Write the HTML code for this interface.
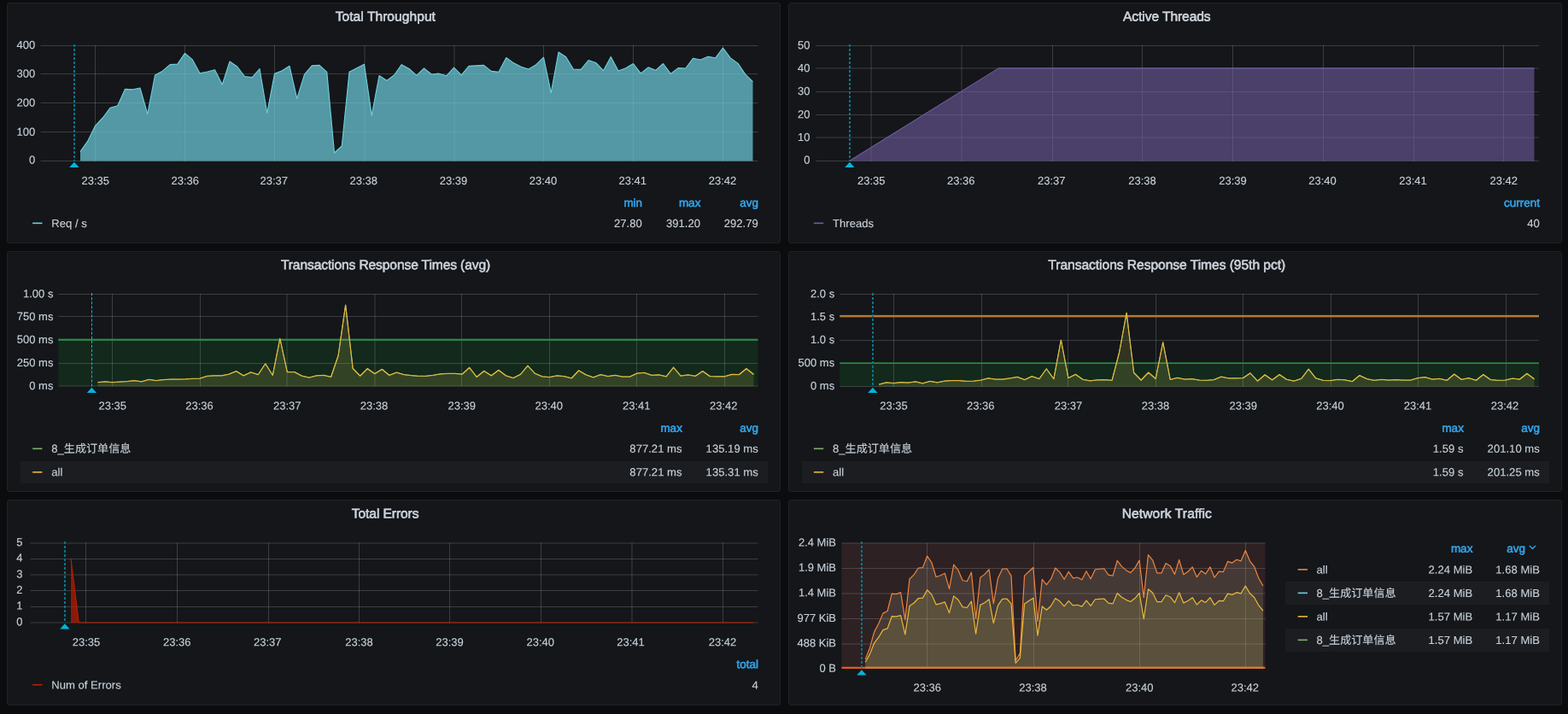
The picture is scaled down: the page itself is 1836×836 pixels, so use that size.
<!DOCTYPE html>
<html lang="zh-CN">
<head>
<meta charset="utf-8">
<title>JMeter Dashboard</title>
<style>
html,body{margin:0;padding:0;}
body{width:1836px;height:836px;overflow:hidden;background:#0b0c0e;font-family:"Liberation Sans", "Noto Sans CJK SC", sans-serif;color:#c7d0d9;position:relative;}
.panel{position:absolute;will-change:transform;box-sizing:border-box;background:#141619;border:1px solid #202226;border-radius:3px;margin:0;}
.panel>svg{position:absolute;left:-1px;top:-1px;overflow:visible;}
text{font-family:"Liberation Sans", "Noto Sans CJK SC", sans-serif;white-space:pre;}
.title{font-size:15.6px;fill:#ccd3dc;stroke:#ccd3dc;stroke-width:0.6px;}
.ax text{font-size:13.0px;fill:#c7d0d9;stroke:#c7d0d9;stroke-width:0.12px;}
.lv{font-size:13.1px;fill:#c7d0d9;stroke:#c7d0d9;stroke-width:0.12px;}
.lh{font-size:13.5px;fill:#33a2e5;stroke:#33a2e5;stroke-width:0.6px;}
.alt{fill:#1b1d21;}
</style>
</head>
<body>
<section class="panel" style="left:8px;top:3px;width:906px;height:282px">
<svg width="906" height="282" viewBox="8 3 906 282">
<text class="title" x="451.35" y="24.5" text-anchor="middle" transform="rotate(0.03 451.35 24.5)" style="letter-spacing:0.03px">Total Throughput</text>
<g class="plot">
<rect x="47.5" y="53" width="840" height="1" fill="rgba(200,200,200,0.22)"/>
<rect x="47.5" y="86" width="840" height="1" fill="rgba(200,200,200,0.22)"/>
<rect x="47.5" y="120" width="840" height="1" fill="rgba(200,200,200,0.22)"/>
<rect x="47.5" y="154" width="840" height="1" fill="rgba(200,200,200,0.22)"/>
<rect x="47.5" y="188" width="840" height="1" fill="rgba(200,200,200,0.22)"/>
<rect x="111" y="53" width="1" height="136" fill="rgba(200,200,200,0.22)"/>
<rect x="216" y="53" width="1" height="136" fill="rgba(200,200,200,0.22)"/>
<rect x="321" y="53" width="1" height="136" fill="rgba(200,200,200,0.22)"/>
<rect x="426.5" y="53" width="1" height="136" fill="rgba(200,200,200,0.22)"/>
<rect x="531.5" y="53" width="1" height="136" fill="rgba(200,200,200,0.22)"/>
<rect x="636" y="53" width="1" height="136" fill="rgba(200,200,200,0.22)"/>
<rect x="741" y="53" width="1" height="136" fill="rgba(200,200,200,0.22)"/>
<rect x="846" y="53" width="1" height="136" fill="rgba(200,200,200,0.22)"/>
<polygon points="94,188.5 94,177.67 102.75,165.17 111.5,147.33 120.25,138 129,126.33 137.75,123.83 146.5,104.33 155.25,104.83 164,103 172.75,133.5 181.5,88 190.25,83.17 199,75.67 207.75,75.17 216.5,62.33 225.25,69.67 234,85.67 242.75,84 251.5,81.67 260.25,99 269,72 277.75,78 286.5,89.5 295.25,90.67 304,80.5 312.75,132.33 321.5,86.33 330.25,82.67 339,77.33 347.75,115.33 356.5,87.17 365.25,76.83 374,76.33 382.75,84.33 391.5,179 400.25,171 409,84.33 417.75,79.67 426.5,75.17 435.25,135.17 444,88.5 452.75,94.33 461.5,88 470.25,75.67 479,80.5 487.75,88.33 496.5,79.83 505.25,87 514,86.17 522.75,88.83 531.5,79.17 540.25,87.83 549,77.33 557.75,76.83 566.5,76.33 575.25,83.33 584,84.33 592.75,67.5 601.5,73.83 610.25,78.17 619,81 627.75,75.67 636.5,67.17 645.25,108.67 654,61 662.75,66.83 671.5,81.17 680.25,81.33 689,70.5 697.75,73.5 706.5,82.67 715.25,66.5 724,83 732.75,79.67 741.5,74.5 750.25,85.83 759,78.83 767.75,82.33 776.5,74.5 785.25,86.33 794,79.67 802.75,80 811.5,68.33 820.25,70 829,66.33 837.75,67.83 846.5,56 855.25,67.83 864,74.17 872.75,87.17 881.5,95.67 881.5,188.5" fill="#6ED0E0" fill-opacity="0.7"/>
<polyline points="94,177.67 102.75,165.17 111.5,147.33 120.25,138 129,126.33 137.75,123.83 146.5,104.33 155.25,104.83 164,103 172.75,133.5 181.5,88 190.25,83.17 199,75.67 207.75,75.17 216.5,62.33 225.25,69.67 234,85.67 242.75,84 251.5,81.67 260.25,99 269,72 277.75,78 286.5,89.5 295.25,90.67 304,80.5 312.75,132.33 321.5,86.33 330.25,82.67 339,77.33 347.75,115.33 356.5,87.17 365.25,76.83 374,76.33 382.75,84.33 391.5,179 400.25,171 409,84.33 417.75,79.67 426.5,75.17 435.25,135.17 444,88.5 452.75,94.33 461.5,88 470.25,75.67 479,80.5 487.75,88.33 496.5,79.83 505.25,87 514,86.17 522.75,88.83 531.5,79.17 540.25,87.83 549,77.33 557.75,76.83 566.5,76.33 575.25,83.33 584,84.33 592.75,67.5 601.5,73.83 610.25,78.17 619,81 627.75,75.67 636.5,67.17 645.25,108.67 654,61 662.75,66.83 671.5,81.17 680.25,81.33 689,70.5 697.75,73.5 706.5,82.67 715.25,66.5 724,83 732.75,79.67 741.5,74.5 750.25,85.83 759,78.83 767.75,82.33 776.5,74.5 785.25,86.33 794,79.67 802.75,80 811.5,68.33 820.25,70 829,66.33 837.75,67.83 846.5,56 855.25,67.83 864,74.17 872.75,87.17 881.5,95.67" fill="none" stroke="#6ED0E0" stroke-width="1.1" stroke-linejoin="round" />
<line x1="87" y1="52" x2="87" y2="188.5" stroke="#0c7389" stroke-width="2" stroke-dasharray="3.1 1.9"/><polygon points="81.2,195.9 92.6,195.9 86.9,189.7" fill="#00b6db"/>
<g class="ax">
<text x="41.25" y="57" text-anchor="end" transform="rotate(0.03 41.25 57)">400</text>
<text x="41.25" y="90.4" text-anchor="end" transform="rotate(0.03 41.25 90.4)">300</text>
<text x="41.25" y="124.5" text-anchor="end" transform="rotate(0.03 41.25 124.5)">200</text>
<text x="41.25" y="158.7" text-anchor="end" transform="rotate(0.03 41.25 158.7)">100</text>
<text x="41.25" y="191.5" text-anchor="end" transform="rotate(0.03 41.25 191.5)">0</text>
<text x="111.75" y="216" text-anchor="middle" transform="rotate(0.03 111.75 216)">23:35</text>
<text x="216.75" y="216" text-anchor="middle" transform="rotate(0.03 216.75 216)">23:36</text>
<text x="320.75" y="216" text-anchor="middle" transform="rotate(0.03 320.75 216)">23:37</text>
<text x="425.75" y="216" text-anchor="middle" transform="rotate(0.03 425.75 216)">23:38</text>
<text x="531" y="216" text-anchor="middle" transform="rotate(0.03 531 216)">23:39</text>
<text x="636" y="216" text-anchor="middle" transform="rotate(0.03 636 216)">23:40</text>
<text x="740.75" y="216" text-anchor="middle" transform="rotate(0.03 740.75 216)">23:41</text>
<text x="846" y="216" text-anchor="middle" transform="rotate(0.03 846 216)">23:42</text>
</g>
</g>
<g class="legend">
<rect x="38.15" y="260.55" width="11.3" height="1.6" fill="#6ED0E0"/>
<text class="lv" x="60.25" y="266.05" transform="rotate(0.03 60.25 266.05)">Req / s</text>
<text class="lh" x="752.15" y="241.95" text-anchor="end" transform="rotate(0.03 752.15 241.95)">min</text>
<text class="lv" x="751.75" y="266.05" text-anchor="end" transform="rotate(0.03 751.75 266.05)">27.80</text>
<text class="lh" x="820.4" y="241.95" text-anchor="end" transform="rotate(0.03 820.4 241.95)">max</text>
<text class="lv" x="820" y="266.05" text-anchor="end" transform="rotate(0.03 820 266.05)">391.20</text>
<text class="lh" x="888.15" y="241.95" text-anchor="end" transform="rotate(0.03 888.15 241.95)">avg</text>
<text class="lv" x="887.75" y="266.05" text-anchor="end" transform="rotate(0.03 887.75 266.05)">292.79</text>
</g>
</svg>
</section>
<section class="panel" style="left:923px;top:3px;width:906px;height:282px">
<svg width="906" height="282" viewBox="923 3 906 282">
<text class="title" x="1366.3" y="24.5" text-anchor="middle" transform="rotate(0.03 1366.3 24.5)" style="letter-spacing:-0.09px">Active Threads</text>
<g class="plot">
<rect x="955" y="53" width="847" height="1" fill="rgba(200,200,200,0.22)"/>
<rect x="955" y="79.5" width="847" height="1" fill="rgba(200,200,200,0.22)"/>
<rect x="955" y="107" width="847" height="1" fill="rgba(200,200,200,0.22)"/>
<rect x="955" y="134" width="847" height="1" fill="rgba(200,200,200,0.22)"/>
<rect x="955" y="160.5" width="847" height="1" fill="rgba(200,200,200,0.22)"/>
<rect x="955" y="188" width="847" height="1" fill="rgba(200,200,200,0.22)"/>
<rect x="1019.5" y="53" width="1" height="136" fill="rgba(200,200,200,0.22)"/>
<rect x="1125.5" y="53" width="1" height="136" fill="rgba(200,200,200,0.22)"/>
<rect x="1232" y="53" width="1" height="136" fill="rgba(200,200,200,0.22)"/>
<rect x="1337" y="53" width="1" height="136" fill="rgba(200,200,200,0.22)"/>
<rect x="1443" y="53" width="1" height="136" fill="rgba(200,200,200,0.22)"/>
<rect x="1549" y="53" width="1" height="136" fill="rgba(200,200,200,0.22)"/>
<rect x="1655" y="53" width="1" height="136" fill="rgba(200,200,200,0.22)"/>
<rect x="1760" y="53" width="1" height="136" fill="rgba(200,200,200,0.22)"/>
<polygon points="994.5,188.5 994.5,188.5 1169.25,79.9 1796.5,79.9 1796.5,188.5" fill="#705DA0" fill-opacity="0.6"/>
<polyline points="994.5,188.5 1169.25,79.9 1796.5,79.9" fill="none" stroke="#705DA0" stroke-width="1.1" stroke-linejoin="round" />
<line x1="995" y1="52" x2="995" y2="188.5" stroke="#0c7389" stroke-width="2" stroke-dasharray="3.1 1.9"/><polygon points="989.2,195.9 1000.6,195.9 994.9,189.7" fill="#00b6db"/>
<g class="ax">
<text x="948.5" y="57.2" text-anchor="end" transform="rotate(0.03 948.5 57.2)">50</text>
<text x="948.5" y="83.9" text-anchor="end" transform="rotate(0.03 948.5 83.9)">40</text>
<text x="948.5" y="111.1" text-anchor="end" transform="rotate(0.03 948.5 111.1)">30</text>
<text x="948.5" y="138.3" text-anchor="end" transform="rotate(0.03 948.5 138.3)">20</text>
<text x="948.5" y="164.9" text-anchor="end" transform="rotate(0.03 948.5 164.9)">10</text>
<text x="948.5" y="191.6" text-anchor="end" transform="rotate(0.03 948.5 191.6)">0</text>
<text x="1020.25" y="216" text-anchor="middle" transform="rotate(0.03 1020.25 216)">23:35</text>
<text x="1125.25" y="216" text-anchor="middle" transform="rotate(0.03 1125.25 216)">23:36</text>
<text x="1231.25" y="216" text-anchor="middle" transform="rotate(0.03 1231.25 216)">23:37</text>
<text x="1337.5" y="216" text-anchor="middle" transform="rotate(0.03 1337.5 216)">23:38</text>
<text x="1443.5" y="216" text-anchor="middle" transform="rotate(0.03 1443.5 216)">23:39</text>
<text x="1548.5" y="216" text-anchor="middle" transform="rotate(0.03 1548.5 216)">23:40</text>
<text x="1654.5" y="216" text-anchor="middle" transform="rotate(0.03 1654.5 216)">23:41</text>
<text x="1760.75" y="216" text-anchor="middle" transform="rotate(0.03 1760.75 216)">23:42</text>
</g>
</g>
<g class="legend">
<rect x="952.9" y="260.55" width="11.3" height="1.6" fill="#705DA0"/>
<text class="lv" x="975" y="266.05" transform="rotate(0.03 975 266.05)">Threads</text>
<text class="lh" x="1803" y="241.95" text-anchor="end" transform="rotate(0.03 1803 241.95)">current</text>
<text class="lv" x="1802.75" y="266.05" text-anchor="end" transform="rotate(0.03 1802.75 266.05)">40</text>
</g>
</svg>
</section>
<section class="panel" style="left:8px;top:294px;width:906px;height:282px">
<svg width="906" height="282" viewBox="8 294 906 282">
<text class="title" x="451.5" y="315.3" text-anchor="middle" transform="rotate(0.03 451.5 315.3)" style="letter-spacing:-0.12px">Transactions Response Times (avg)</text>
<g class="plot">
<rect x="68.25" y="398" width="819.25" height="54.2" fill="rgba(11,237,50,0.09)"/>
<rect x="68.25" y="344" width="819.25" height="1" fill="rgba(200,200,200,0.22)"/>
<rect x="68.25" y="370" width="819.25" height="1" fill="rgba(200,200,200,0.22)"/>
<rect x="68.25" y="397.5" width="819.25" height="1" fill="rgba(200,200,200,0.22)"/>
<rect x="68.25" y="425" width="819.25" height="1" fill="rgba(200,200,200,0.22)"/>
<rect x="68.25" y="451.5" width="819.25" height="1" fill="rgba(200,200,200,0.22)"/>
<rect x="131" y="344" width="1" height="108.5" fill="rgba(200,200,200,0.22)"/>
<rect x="234" y="344" width="1" height="108.5" fill="rgba(200,200,200,0.22)"/>
<rect x="335.5" y="344" width="1" height="108.5" fill="rgba(200,200,200,0.22)"/>
<rect x="438.5" y="344" width="1" height="108.5" fill="rgba(200,200,200,0.22)"/>
<rect x="540" y="344" width="1" height="108.5" fill="rgba(200,200,200,0.22)"/>
<rect x="643" y="344" width="1" height="108.5" fill="rgba(200,200,200,0.22)"/>
<rect x="745" y="344" width="1" height="108.5" fill="rgba(200,200,200,0.22)"/>
<rect x="848" y="344" width="1" height="108.5" fill="rgba(200,200,200,0.22)"/>
<rect x="68.25" y="396.7" width="819.25" height="2.2" fill="#2b8a4a"/>
<polygon points="114.5,452.5 114.5,447.5 123.03,446.75 131.57,447.5 140.1,447 148.63,446.5 157.16,445.5 165.7,446.75 174.23,444.25 182.76,445.5 191.3,444.5 199.83,444 208.36,444 216.9,443.75 225.43,443.25 233.96,443 242.5,440.25 251.03,439.75 259.56,439.75 268.09,438 276.63,434.5 285.16,439.75 293.69,435.75 302.23,438.5 310.76,425.75 319.29,439.25 327.82,396.25 336.36,435.5 344.89,435.5 353.42,440 361.96,442 370.49,439.75 379.02,439.25 387.56,441.25 396.09,416.25 404.62,357 413.15,431.25 421.69,440 430.22,431.5 438.75,437.5 447.29,432.25 455.82,439.25 464.35,436 472.89,438.5 481.42,439.5 489.95,440.25 498.48,440.25 507.02,439.25 515.55,437.75 524.08,437.25 532.62,437.25 541.15,438 549.68,430.25 558.22,441.25 566.75,434.25 575.28,439.75 583.82,433.25 592.35,439.75 600.88,442.5 609.41,438.25 617.95,428 626.48,437.25 635.01,440.75 643.55,441.5 652.08,439.75 660.61,440.5 669.14,442.75 677.68,433.75 686.21,438.75 694.74,441.75 703.28,438.5 711.81,440.5 720.34,439.25 728.88,441 737.41,441 745.94,437 754.47,436.25 763.01,439.25 771.54,438.75 780.07,440.75 788.61,430 797.14,440 805.67,438.75 814.21,440.25 822.74,434.5 831.27,440.5 839.8,440.75 848.34,440.75 856.87,438.25 865.4,438.5 873.94,431.5 882.47,438.25 882.47,452.5" fill="#7EB26D" fill-opacity="0.1"/>
<polyline points="114.5,447.8 123.03,447.05 131.57,447.8 140.1,447.3 148.63,446.8 157.16,445.8 165.7,447.05 174.23,444.55 182.76,445.8 191.3,444.8 199.83,444.3 208.36,444.3 216.9,444.05 225.43,443.55 233.96,443.3 242.5,440.55 251.03,440.05 259.56,440.05 268.09,438.3 276.63,434.8 285.16,440.05 293.69,436.05 302.23,438.8 310.76,426.05 319.29,439.55 327.82,396.55 336.36,435.8 344.89,435.8 353.42,440.3 361.96,442.3 370.49,440.05 379.02,439.55 387.56,441.55 396.09,416.55 404.62,357.3 413.15,431.55 421.69,440.3 430.22,431.8 438.75,437.8 447.29,432.55 455.82,439.55 464.35,436.3 472.89,438.8 481.42,439.8 489.95,440.55 498.48,440.55 507.02,439.55 515.55,438.05 524.08,437.55 532.62,437.55 541.15,438.3 549.68,430.55 558.22,441.55 566.75,434.55 575.28,440.05 583.82,433.55 592.35,440.05 600.88,442.8 609.41,438.55 617.95,428.3 626.48,437.55 635.01,441.05 643.55,441.8 652.08,440.05 660.61,440.8 669.14,443.05 677.68,434.05 686.21,439.05 694.74,442.05 703.28,438.8 711.81,440.8 720.34,439.55 728.88,441.3 737.41,441.3 745.94,437.3 754.47,436.55 763.01,439.55 771.54,439.05 780.07,441.05 788.61,430.3 797.14,440.3 805.67,439.05 814.21,440.55 822.74,434.8 831.27,440.8 839.8,441.05 848.34,441.05 856.87,438.55 865.4,438.8 873.94,431.8 882.47,438.55" fill="none" stroke="#7EB26D" stroke-width="1.1" stroke-linejoin="round" />
<polygon points="114.5,452.5 114.5,447.5 123.03,446.75 131.57,447.5 140.1,447 148.63,446.5 157.16,445.5 165.7,446.75 174.23,444.25 182.76,445.5 191.3,444.5 199.83,444 208.36,444 216.9,443.75 225.43,443.25 233.96,443 242.5,440.25 251.03,439.75 259.56,439.75 268.09,438 276.63,434.5 285.16,439.75 293.69,435.75 302.23,438.5 310.76,425.75 319.29,439.25 327.82,396.25 336.36,435.5 344.89,435.5 353.42,440 361.96,442 370.49,439.75 379.02,439.25 387.56,441.25 396.09,416.25 404.62,357 413.15,431.25 421.69,440 430.22,431.5 438.75,437.5 447.29,432.25 455.82,439.25 464.35,436 472.89,438.5 481.42,439.5 489.95,440.25 498.48,440.25 507.02,439.25 515.55,437.75 524.08,437.25 532.62,437.25 541.15,438 549.68,430.25 558.22,441.25 566.75,434.25 575.28,439.75 583.82,433.25 592.35,439.75 600.88,442.5 609.41,438.25 617.95,428 626.48,437.25 635.01,440.75 643.55,441.5 652.08,439.75 660.61,440.5 669.14,442.75 677.68,433.75 686.21,438.75 694.74,441.75 703.28,438.5 711.81,440.5 720.34,439.25 728.88,441 737.41,441 745.94,437 754.47,436.25 763.01,439.25 771.54,438.75 780.07,440.75 788.61,430 797.14,440 805.67,438.75 814.21,440.25 822.74,434.5 831.27,440.5 839.8,440.75 848.34,440.75 856.87,438.25 865.4,438.5 873.94,431.5 882.47,438.25 882.47,452.5" fill="#EAB839" fill-opacity="0.1"/>
<polyline points="114.5,447.5 123.03,446.75 131.57,447.5 140.1,447 148.63,446.5 157.16,445.5 165.7,446.75 174.23,444.25 182.76,445.5 191.3,444.5 199.83,444 208.36,444 216.9,443.75 225.43,443.25 233.96,443 242.5,440.25 251.03,439.75 259.56,439.75 268.09,438 276.63,434.5 285.16,439.75 293.69,435.75 302.23,438.5 310.76,425.75 319.29,439.25 327.82,396.25 336.36,435.5 344.89,435.5 353.42,440 361.96,442 370.49,439.75 379.02,439.25 387.56,441.25 396.09,416.25 404.62,357 413.15,431.25 421.69,440 430.22,431.5 438.75,437.5 447.29,432.25 455.82,439.25 464.35,436 472.89,438.5 481.42,439.5 489.95,440.25 498.48,440.25 507.02,439.25 515.55,437.75 524.08,437.25 532.62,437.25 541.15,438 549.68,430.25 558.22,441.25 566.75,434.25 575.28,439.75 583.82,433.25 592.35,439.75 600.88,442.5 609.41,438.25 617.95,428 626.48,437.25 635.01,440.75 643.55,441.5 652.08,439.75 660.61,440.5 669.14,442.75 677.68,433.75 686.21,438.75 694.74,441.75 703.28,438.5 711.81,440.5 720.34,439.25 728.88,441 737.41,441 745.94,437 754.47,436.25 763.01,439.25 771.54,438.75 780.07,440.75 788.61,430 797.14,440 805.67,438.75 814.21,440.25 822.74,434.5 831.27,440.5 839.8,440.75 848.34,440.75 856.87,438.25 865.4,438.5 873.94,431.5 882.47,438.25" fill="none" stroke="#EAB839" stroke-width="1.1" stroke-linejoin="round" />
<line x1="107.5" y1="343" x2="107.5" y2="452.5" stroke="#00bfe6" stroke-width="1" stroke-dasharray="3.2 1.87"/><polygon points="101.7,459.9 113.1,459.9 107.4,453.7" fill="#00b6db"/>
<g class="ax">
<text x="62.4" y="348.3" text-anchor="end" transform="rotate(0.03 62.4 348.3)">1.00 s</text>
<text x="62.4" y="374.9" text-anchor="end" transform="rotate(0.03 62.4 374.9)">750 ms</text>
<text x="62.4" y="401.9" text-anchor="end" transform="rotate(0.03 62.4 401.9)">500 ms</text>
<text x="62.4" y="429.1" text-anchor="end" transform="rotate(0.03 62.4 429.1)">250 ms</text>
<text x="62.4" y="455.9" text-anchor="end" transform="rotate(0.03 62.4 455.9)">0 ms</text>
<text x="131.75" y="479.6" text-anchor="middle" transform="rotate(0.03 131.75 479.6)">23:35</text>
<text x="233.5" y="479.6" text-anchor="middle" transform="rotate(0.03 233.5 479.6)">23:36</text>
<text x="336.25" y="479.6" text-anchor="middle" transform="rotate(0.03 336.25 479.6)">23:37</text>
<text x="438" y="479.6" text-anchor="middle" transform="rotate(0.03 438 479.6)">23:38</text>
<text x="540.75" y="479.6" text-anchor="middle" transform="rotate(0.03 540.75 479.6)">23:39</text>
<text x="642.75" y="479.6" text-anchor="middle" transform="rotate(0.03 642.75 479.6)">23:40</text>
<text x="745.25" y="479.6" text-anchor="middle" transform="rotate(0.03 745.25 479.6)">23:41</text>
<text x="847.25" y="479.6" text-anchor="middle" transform="rotate(0.03 847.25 479.6)">23:42</text>
</g>
</g>
<g class="legend">
<rect class="alt" x="24" y="540" width="875" height="26"/>
<rect x="38.15" y="524.55" width="11.3" height="1.6" fill="#7EB26D"/>
<text class="lv" x="60.25" y="529.8" transform="rotate(0.03 60.25 529.8)">8_生成订单信息</text>
<rect x="38.15" y="552.05" width="11.3" height="1.6" fill="#EAB839"/>
<text class="lv" x="60.25" y="557.3" transform="rotate(0.03 60.25 557.3)">all</text>
<text class="lh" x="798.9" y="505.7" text-anchor="end" transform="rotate(0.03 798.9 505.7)">max</text>
<text class="lv" x="798.5" y="529.8" text-anchor="end" transform="rotate(0.03 798.5 529.8)">877.21 ms</text>
<text class="lv" x="798.5" y="557.3" text-anchor="end" transform="rotate(0.03 798.5 557.3)">877.21 ms</text>
<text class="lh" x="888.15" y="505.7" text-anchor="end" transform="rotate(0.03 888.15 505.7)">avg</text>
<text class="lv" x="887.75" y="529.8" text-anchor="end" transform="rotate(0.03 887.75 529.8)">135.19 ms</text>
<text class="lv" x="887.75" y="557.3" text-anchor="end" transform="rotate(0.03 887.75 557.3)">135.31 ms</text>
</g>
</svg>
</section>
<section class="panel" style="left:923px;top:294px;width:906px;height:282px">
<svg width="906" height="282" viewBox="923 294 906 282">
<text class="title" x="1366.25" y="315.3" text-anchor="middle" transform="rotate(0.03 1366.25 315.3)" style="letter-spacing:-0.04px">Transactions Response Times (95th pct)</text>
<g class="plot">
<rect x="983.25" y="425" width="818.75" height="27.4" fill="rgba(11,237,50,0.09)"/>
<rect x="983.25" y="344" width="818.75" height="1" fill="rgba(200,200,200,0.22)"/>
<rect x="983.25" y="371" width="818.75" height="1" fill="rgba(200,200,200,0.22)"/>
<rect x="983.25" y="398" width="818.75" height="1" fill="rgba(200,200,200,0.22)"/>
<rect x="983.25" y="425" width="818.75" height="1" fill="rgba(200,200,200,0.22)"/>
<rect x="983.25" y="452" width="818.75" height="1" fill="rgba(200,200,200,0.22)"/>
<rect x="1046" y="344" width="1" height="109" fill="rgba(200,200,200,0.22)"/>
<rect x="1149" y="344" width="1" height="109" fill="rgba(200,200,200,0.22)"/>
<rect x="1250" y="344" width="1" height="109" fill="rgba(200,200,200,0.22)"/>
<rect x="1353" y="344" width="1" height="109" fill="rgba(200,200,200,0.22)"/>
<rect x="1455" y="344" width="1" height="109" fill="rgba(200,200,200,0.22)"/>
<rect x="1558" y="344" width="1" height="109" fill="rgba(200,200,200,0.22)"/>
<rect x="1660" y="344" width="1" height="109" fill="rgba(200,200,200,0.22)"/>
<rect x="1763" y="344" width="1" height="109" fill="rgba(200,200,200,0.22)"/>
<rect x="983.25" y="424.35" width="818.75" height="1.7" fill="#2b8a4a"/>
<rect x="983.25" y="368.9" width="818.75" height="2.2" fill="#b9772f"/>
<polygon points="1029.25,452.5 1029.25,450 1037.78,447.75 1046.3,448.5 1054.83,447.5 1063.35,448 1071.88,446.75 1080.4,448.75 1088.92,446.25 1097.45,447.75 1105.97,446 1114.5,445.5 1123.03,445.5 1131.55,446.25 1140.08,446 1148.6,445 1157.12,442.75 1165.65,444 1174.17,444 1182.7,442.75 1191.22,441.25 1199.75,444.5 1208.28,440.5 1216.8,443.5 1225.33,431.75 1233.85,443.5 1242.38,398 1250.9,442.5 1259.42,438.25 1267.95,444.25 1276.47,445.75 1285,444.75 1293.53,444.5 1302.05,445.25 1310.58,412.5 1319.1,366.25 1327.62,436.25 1336.15,445 1344.67,436 1353.2,443.25 1361.72,400.5 1370.25,444.25 1378.78,442.25 1387.3,444 1395.83,443.5 1404.35,445 1412.88,445.25 1421.4,444.5 1429.92,441 1438.45,442.75 1446.97,442.75 1455.5,442.5 1464.03,436.75 1472.55,446 1481.08,438.75 1489.6,444.75 1498.12,438.5 1506.65,444.25 1515.17,446 1523.7,443.25 1532.22,432 1540.75,442.75 1549.28,445.25 1557.8,445.5 1566.33,444.25 1574.85,444.75 1583.38,446.5 1591.9,439.5 1600.43,443.5 1608.95,445.25 1617.47,444.25 1626,445 1634.53,444.5 1643.05,445 1651.58,445 1660.1,442.5 1668.62,441.5 1677.15,444 1685.68,443.25 1694.2,445.25 1702.72,438 1711.25,444.25 1719.78,442.5 1728.3,445.25 1736.83,438.5 1745.35,444.5 1753.88,445.25 1762.4,445 1770.93,443 1779.45,444 1787.97,437.25 1796.5,443.75 1796.5,452.5" fill="#7EB26D" fill-opacity="0.1"/>
<polyline points="1029.25,450.3 1037.78,448.05 1046.3,448.8 1054.83,447.8 1063.35,448.3 1071.88,447.05 1080.4,449.05 1088.92,446.55 1097.45,448.05 1105.97,446.3 1114.5,445.8 1123.03,445.8 1131.55,446.55 1140.08,446.3 1148.6,445.3 1157.12,443.05 1165.65,444.3 1174.17,444.3 1182.7,443.05 1191.22,441.55 1199.75,444.8 1208.28,440.8 1216.8,443.8 1225.33,432.05 1233.85,443.8 1242.38,398.3 1250.9,442.8 1259.42,438.55 1267.95,444.55 1276.47,446.05 1285,445.05 1293.53,444.8 1302.05,445.55 1310.58,412.8 1319.1,366.55 1327.62,436.55 1336.15,445.3 1344.67,436.3 1353.2,443.55 1361.72,400.8 1370.25,444.55 1378.78,442.55 1387.3,444.3 1395.83,443.8 1404.35,445.3 1412.88,445.55 1421.4,444.8 1429.92,441.3 1438.45,443.05 1446.97,443.05 1455.5,442.8 1464.03,437.05 1472.55,446.3 1481.08,439.05 1489.6,445.05 1498.12,438.8 1506.65,444.55 1515.17,446.3 1523.7,443.55 1532.22,432.3 1540.75,443.05 1549.28,445.55 1557.8,445.8 1566.33,444.55 1574.85,445.05 1583.38,446.8 1591.9,439.8 1600.43,443.8 1608.95,445.55 1617.47,444.55 1626,445.3 1634.53,444.8 1643.05,445.3 1651.58,445.3 1660.1,442.8 1668.62,441.8 1677.15,444.3 1685.68,443.55 1694.2,445.55 1702.72,438.3 1711.25,444.55 1719.78,442.8 1728.3,445.55 1736.83,438.8 1745.35,444.8 1753.88,445.55 1762.4,445.3 1770.93,443.3 1779.45,444.3 1787.97,437.55 1796.5,444.05" fill="none" stroke="#7EB26D" stroke-width="1.1" stroke-linejoin="round" />
<polygon points="1029.25,452.5 1029.25,450 1037.78,447.75 1046.3,448.5 1054.83,447.5 1063.35,448 1071.88,446.75 1080.4,448.75 1088.92,446.25 1097.45,447.75 1105.97,446 1114.5,445.5 1123.03,445.5 1131.55,446.25 1140.08,446 1148.6,445 1157.12,442.75 1165.65,444 1174.17,444 1182.7,442.75 1191.22,441.25 1199.75,444.5 1208.28,440.5 1216.8,443.5 1225.33,431.75 1233.85,443.5 1242.38,398 1250.9,442.5 1259.42,438.25 1267.95,444.25 1276.47,445.75 1285,444.75 1293.53,444.5 1302.05,445.25 1310.58,412.5 1319.1,366.25 1327.62,436.25 1336.15,445 1344.67,436 1353.2,443.25 1361.72,400.5 1370.25,444.25 1378.78,442.25 1387.3,444 1395.83,443.5 1404.35,445 1412.88,445.25 1421.4,444.5 1429.92,441 1438.45,442.75 1446.97,442.75 1455.5,442.5 1464.03,436.75 1472.55,446 1481.08,438.75 1489.6,444.75 1498.12,438.5 1506.65,444.25 1515.17,446 1523.7,443.25 1532.22,432 1540.75,442.75 1549.28,445.25 1557.8,445.5 1566.33,444.25 1574.85,444.75 1583.38,446.5 1591.9,439.5 1600.43,443.5 1608.95,445.25 1617.47,444.25 1626,445 1634.53,444.5 1643.05,445 1651.58,445 1660.1,442.5 1668.62,441.5 1677.15,444 1685.68,443.25 1694.2,445.25 1702.72,438 1711.25,444.25 1719.78,442.5 1728.3,445.25 1736.83,438.5 1745.35,444.5 1753.88,445.25 1762.4,445 1770.93,443 1779.45,444 1787.97,437.25 1796.5,443.75 1796.5,452.5" fill="#EAB839" fill-opacity="0.1"/>
<polyline points="1029.25,450 1037.78,447.75 1046.3,448.5 1054.83,447.5 1063.35,448 1071.88,446.75 1080.4,448.75 1088.92,446.25 1097.45,447.75 1105.97,446 1114.5,445.5 1123.03,445.5 1131.55,446.25 1140.08,446 1148.6,445 1157.12,442.75 1165.65,444 1174.17,444 1182.7,442.75 1191.22,441.25 1199.75,444.5 1208.28,440.5 1216.8,443.5 1225.33,431.75 1233.85,443.5 1242.38,398 1250.9,442.5 1259.42,438.25 1267.95,444.25 1276.47,445.75 1285,444.75 1293.53,444.5 1302.05,445.25 1310.58,412.5 1319.1,366.25 1327.62,436.25 1336.15,445 1344.67,436 1353.2,443.25 1361.72,400.5 1370.25,444.25 1378.78,442.25 1387.3,444 1395.83,443.5 1404.35,445 1412.88,445.25 1421.4,444.5 1429.92,441 1438.45,442.75 1446.97,442.75 1455.5,442.5 1464.03,436.75 1472.55,446 1481.08,438.75 1489.6,444.75 1498.12,438.5 1506.65,444.25 1515.17,446 1523.7,443.25 1532.22,432 1540.75,442.75 1549.28,445.25 1557.8,445.5 1566.33,444.25 1574.85,444.75 1583.38,446.5 1591.9,439.5 1600.43,443.5 1608.95,445.25 1617.47,444.25 1626,445 1634.53,444.5 1643.05,445 1651.58,445 1660.1,442.5 1668.62,441.5 1677.15,444 1685.68,443.25 1694.2,445.25 1702.72,438 1711.25,444.25 1719.78,442.5 1728.3,445.25 1736.83,438.5 1745.35,444.5 1753.88,445.25 1762.4,445 1770.93,443 1779.45,444 1787.97,437.25 1796.5,443.75" fill="none" stroke="#EAB839" stroke-width="1.1" stroke-linejoin="round" />
<line x1="1022" y1="343" x2="1022" y2="452.5" stroke="#0c7389" stroke-width="2" stroke-dasharray="3.1 1.9"/><polygon points="1016.2,459.9 1027.6,459.9 1021.9,453.7" fill="#00b6db"/>
<g class="ax">
<text x="977.2" y="348.3" text-anchor="end" transform="rotate(0.03 977.2 348.3)">2.0 s</text>
<text x="977.2" y="374.9" text-anchor="end" transform="rotate(0.03 977.2 374.9)">1.5 s</text>
<text x="977.2" y="401.9" text-anchor="end" transform="rotate(0.03 977.2 401.9)">1.0 s</text>
<text x="977.2" y="429.1" text-anchor="end" transform="rotate(0.03 977.2 429.1)">500 ms</text>
<text x="977.2" y="455.9" text-anchor="end" transform="rotate(0.03 977.2 455.9)">0 ms</text>
<text x="1046.5" y="479.6" text-anchor="middle" transform="rotate(0.03 1046.5 479.6)">23:35</text>
<text x="1148.25" y="479.6" text-anchor="middle" transform="rotate(0.03 1148.25 479.6)">23:36</text>
<text x="1251" y="479.6" text-anchor="middle" transform="rotate(0.03 1251 479.6)">23:37</text>
<text x="1353" y="479.6" text-anchor="middle" transform="rotate(0.03 1353 479.6)">23:38</text>
<text x="1455.75" y="479.6" text-anchor="middle" transform="rotate(0.03 1455.75 479.6)">23:39</text>
<text x="1557.5" y="479.6" text-anchor="middle" transform="rotate(0.03 1557.5 479.6)">23:40</text>
<text x="1660" y="479.6" text-anchor="middle" transform="rotate(0.03 1660 479.6)">23:41</text>
<text x="1762" y="479.6" text-anchor="middle" transform="rotate(0.03 1762 479.6)">23:42</text>
</g>
</g>
<g class="legend">
<rect class="alt" x="939" y="540" width="875" height="26"/>
<rect x="952.9" y="524.55" width="11.3" height="1.6" fill="#7EB26D"/>
<text class="lv" x="975" y="529.8" transform="rotate(0.03 975 529.8)">8_生成订单信息</text>
<rect x="952.9" y="552.05" width="11.3" height="1.6" fill="#EAB839"/>
<text class="lv" x="975" y="557.3" transform="rotate(0.03 975 557.3)">all</text>
<text class="lh" x="1713.9" y="505.7" text-anchor="end" transform="rotate(0.03 1713.9 505.7)">max</text>
<text class="lv" x="1713.5" y="529.8" text-anchor="end" transform="rotate(0.03 1713.5 529.8)">1.59 s</text>
<text class="lv" x="1713.5" y="557.3" text-anchor="end" transform="rotate(0.03 1713.5 557.3)">1.59 s</text>
<text class="lh" x="1803.15" y="505.7" text-anchor="end" transform="rotate(0.03 1803.15 505.7)">avg</text>
<text class="lv" x="1802.75" y="529.8" text-anchor="end" transform="rotate(0.03 1802.75 529.8)">201.10 ms</text>
<text class="lv" x="1802.75" y="557.3" text-anchor="end" transform="rotate(0.03 1802.75 557.3)">201.25 ms</text>
</g>
</svg>
</section>
<section class="panel" style="left:8px;top:585px;width:906px;height:241px">
<svg width="906" height="241" viewBox="8 585 906 241">
<text class="title" x="451.1" y="606.6" text-anchor="middle" transform="rotate(0.03 451.1 606.6)" style="letter-spacing:-0.09px">Total Errors</text>
<g class="plot">
<rect x="35.5" y="635.5" width="852" height="1" fill="rgba(200,200,200,0.22)"/>
<rect x="35.5" y="654" width="852" height="1" fill="rgba(200,200,200,0.22)"/>
<rect x="35.5" y="672.5" width="852" height="1" fill="rgba(200,200,200,0.22)"/>
<rect x="35.5" y="691" width="852" height="1" fill="rgba(200,200,200,0.22)"/>
<rect x="35.5" y="710" width="852" height="1" fill="rgba(200,200,200,0.22)"/>
<rect x="35.5" y="728.5" width="852" height="1" fill="rgba(200,200,200,0.22)"/>
<rect x="100" y="635.5" width="1" height="94" fill="rgba(200,200,200,0.22)"/>
<rect x="207" y="635.5" width="1" height="94" fill="rgba(200,200,200,0.22)"/>
<rect x="314" y="635.5" width="1" height="94" fill="rgba(200,200,200,0.22)"/>
<rect x="420" y="635.5" width="1" height="94" fill="rgba(200,200,200,0.22)"/>
<rect x="526" y="635.5" width="1" height="94" fill="rgba(200,200,200,0.22)"/>
<rect x="633" y="635.5" width="1" height="94" fill="rgba(200,200,200,0.22)"/>
<rect x="739.5" y="635.5" width="1" height="94" fill="rgba(200,200,200,0.22)"/>
<rect x="846" y="635.5" width="1" height="94" fill="rgba(200,200,200,0.22)"/>
<polygon points="83,729 83,654.5 92.25,729 882,729 882,729" fill="#BF1B00" fill-opacity="0.7"/>
<polyline points="83,654.5 92.25,729 882,729" fill="none" stroke="#BF1B00" stroke-width="1.15" stroke-linejoin="round" />
<line x1="76" y1="634" x2="76" y2="729" stroke="#0c7389" stroke-width="2" stroke-dasharray="3.1 1.9"/><polygon points="70.2,736.4 81.6,736.4 75.9,730.2" fill="#00b6db"/>
<g class="ax">
<text x="26.5" y="639.2" text-anchor="end" transform="rotate(0.03 26.5 639.2)">5</text>
<text x="26.5" y="657.6" text-anchor="end" transform="rotate(0.03 26.5 657.6)">4</text>
<text x="26.5" y="676.4" text-anchor="end" transform="rotate(0.03 26.5 676.4)">3</text>
<text x="26.5" y="694.9" text-anchor="end" transform="rotate(0.03 26.5 694.9)">2</text>
<text x="26.5" y="713.5" text-anchor="end" transform="rotate(0.03 26.5 713.5)">1</text>
<text x="26.5" y="732.3" text-anchor="end" transform="rotate(0.03 26.5 732.3)">0</text>
<text x="101" y="756.3" text-anchor="middle" transform="rotate(0.03 101 756.3)">23:35</text>
<text x="207.25" y="756.3" text-anchor="middle" transform="rotate(0.03 207.25 756.3)">23:36</text>
<text x="313.25" y="756.3" text-anchor="middle" transform="rotate(0.03 313.25 756.3)">23:37</text>
<text x="420.5" y="756.3" text-anchor="middle" transform="rotate(0.03 420.5 756.3)">23:38</text>
<text x="526.5" y="756.3" text-anchor="middle" transform="rotate(0.03 526.5 756.3)">23:39</text>
<text x="632.75" y="756.3" text-anchor="middle" transform="rotate(0.03 632.75 756.3)">23:40</text>
<text x="738.5" y="756.3" text-anchor="middle" transform="rotate(0.03 738.5 756.3)">23:41</text>
<text x="846" y="756.3" text-anchor="middle" transform="rotate(0.03 846 756.3)">23:42</text>
</g>
</g>
<g class="legend">
<rect x="38.15" y="801.05" width="11.3" height="1.6" fill="#BF1B00"/>
<text class="lv" x="60.25" y="806.55" transform="rotate(0.03 60.25 806.55)">Num of Errors</text>
<text class="lh" x="888.1" y="782.2" text-anchor="end" transform="rotate(0.03 888.1 782.2)">total</text>
<text class="lv" x="887.75" y="806.8" text-anchor="end" transform="rotate(0.03 887.75 806.8)">4</text>
</g>
</svg>
</section>
<section class="panel" style="left:923px;top:585px;width:906px;height:241px">
<svg width="906" height="241" viewBox="923 585 906 241">
<text class="title" x="1366.35" y="606.6" text-anchor="middle" transform="rotate(0.03 1366.35 606.6)" style="letter-spacing:0.11px">Network Traffic</text>
<g class="plot">
<rect x="985.5" y="635.5" width="496.0" height="147.5" fill="rgba(234,112,112,0.12)"/>
<rect x="985.5" y="635.5" width="496" height="1" fill="rgba(200,200,200,0.22)"/>
<rect x="985.5" y="665" width="496" height="1" fill="rgba(200,200,200,0.22)"/>
<rect x="985.5" y="694.5" width="496" height="1" fill="rgba(200,200,200,0.22)"/>
<rect x="985.5" y="724" width="496" height="1" fill="rgba(200,200,200,0.22)"/>
<rect x="985.5" y="753.5" width="496" height="1" fill="rgba(200,200,200,0.22)"/>
<rect x="1085" y="635.5" width="1" height="147.5" fill="rgba(200,200,200,0.22)"/>
<rect x="1210" y="635.5" width="1" height="147.5" fill="rgba(200,200,200,0.22)"/>
<rect x="1334" y="635.5" width="1" height="147.5" fill="rgba(200,200,200,0.22)"/>
<rect x="1458" y="635.5" width="1" height="147.5" fill="rgba(200,200,200,0.22)"/>
<rect x="985.5" y="780.75" width="496" height="2.3" fill="#e05a1e"/>
<polygon points="1013.25,782.5 1013.25,771.9 1018.42,758.8 1023.6,740.12 1028.78,730.34 1033.95,718.11 1039.12,715.49 1044.3,695.06 1049.47,695.59 1054.65,693.67 1059.83,725.62 1065,677.95 1070.17,672.89 1075.35,665.03 1080.53,664.5 1085.7,651.06 1090.88,658.74 1096.05,675.51 1101.22,673.76 1106.4,671.31 1111.58,689.48 1116.75,661.19 1121.92,667.47 1127.1,679.52 1132.28,680.74 1137.45,670.09 1142.62,724.4 1147.8,676.2 1152.97,672.36 1158.15,666.77 1163.33,706.59 1168.5,677.08 1173.67,666.25 1178.85,665.73 1184.03,674.11 1189.2,773.3 1194.38,764.91 1199.55,674.11 1204.72,669.22 1209.9,664.5 1215.08,727.37 1220.25,678.47 1225.42,684.59 1230.6,677.95 1235.78,665.03 1240.95,670.09 1246.12,678.3 1251.3,669.39 1256.47,676.9 1261.65,676.03 1266.83,678.82 1272,668.69 1277.17,677.78 1282.35,666.77 1287.53,666.25 1292.7,665.73 1297.88,673.06 1303.05,674.11 1308.22,656.47 1313.4,663.11 1318.58,667.65 1323.75,670.62 1328.92,665.03 1334.1,656.12 1339.28,699.6 1344.45,649.66 1349.62,655.77 1354.8,670.79 1359.97,670.96 1365.15,659.61 1370.33,662.76 1375.5,672.36 1380.67,655.42 1385.85,672.71 1391.03,669.22 1396.2,663.81 1401.38,675.68 1406.55,668.35 1411.72,672.01 1416.9,663.81 1422.08,676.2 1427.25,669.22 1432.42,669.57 1437.6,657.34 1442.78,659.09 1447.95,655.25 1453.12,656.82 1458.3,644.42 1463.47,656.82 1468.65,663.46 1473.83,677.08 1479,685.98 1479,782.5" fill="#6ED0E0" fill-opacity="0.1"/>
<polygon points="1013.25,782.5 1013.25,771.9 1018.42,758.8 1023.6,740.12 1028.78,730.34 1033.95,718.11 1039.12,715.49 1044.3,695.06 1049.47,695.59 1054.65,693.67 1059.83,725.62 1065,677.95 1070.17,672.89 1075.35,665.03 1080.53,664.5 1085.7,651.06 1090.88,658.74 1096.05,675.51 1101.22,673.76 1106.4,671.31 1111.58,689.48 1116.75,661.19 1121.92,667.47 1127.1,679.52 1132.28,680.74 1137.45,670.09 1142.62,724.4 1147.8,676.2 1152.97,672.36 1158.15,666.77 1163.33,706.59 1168.5,677.08 1173.67,666.25 1178.85,665.73 1184.03,674.11 1189.2,773.3 1194.38,764.91 1199.55,674.11 1204.72,669.22 1209.9,664.5 1215.08,727.37 1220.25,678.47 1225.42,684.59 1230.6,677.95 1235.78,665.03 1240.95,670.09 1246.12,678.3 1251.3,669.39 1256.47,676.9 1261.65,676.03 1266.83,678.82 1272,668.69 1277.17,677.78 1282.35,666.77 1287.53,666.25 1292.7,665.73 1297.88,673.06 1303.05,674.11 1308.22,656.47 1313.4,663.11 1318.58,667.65 1323.75,670.62 1328.92,665.03 1334.1,656.12 1339.28,699.6 1344.45,649.66 1349.62,655.77 1354.8,670.79 1359.97,670.96 1365.15,659.61 1370.33,662.76 1375.5,672.36 1380.67,655.42 1385.85,672.71 1391.03,669.22 1396.2,663.81 1401.38,675.68 1406.55,668.35 1411.72,672.01 1416.9,663.81 1422.08,676.2 1427.25,669.22 1432.42,669.57 1437.6,657.34 1442.78,659.09 1447.95,655.25 1453.12,656.82 1458.3,644.42 1463.47,656.82 1468.65,663.46 1473.83,677.08 1479,685.98 1479,782.5" fill="#EF843C" fill-opacity="0.1"/>
<polyline points="1013.25,771.9 1018.42,758.8 1023.6,740.12 1028.78,730.34 1033.95,718.11 1039.12,715.49 1044.3,695.06 1049.47,695.59 1054.65,693.67 1059.83,725.62 1065,677.95 1070.17,672.89 1075.35,665.03 1080.53,664.5 1085.7,651.06 1090.88,658.74 1096.05,675.51 1101.22,673.76 1106.4,671.31 1111.58,689.48 1116.75,661.19 1121.92,667.47 1127.1,679.52 1132.28,680.74 1137.45,670.09 1142.62,724.4 1147.8,676.2 1152.97,672.36 1158.15,666.77 1163.33,706.59 1168.5,677.08 1173.67,666.25 1178.85,665.73 1184.03,674.11 1189.2,773.3 1194.38,764.91 1199.55,674.11 1204.72,669.22 1209.9,664.5 1215.08,727.37 1220.25,678.47 1225.42,684.59 1230.6,677.95 1235.78,665.03 1240.95,670.09 1246.12,678.3 1251.3,669.39 1256.47,676.9 1261.65,676.03 1266.83,678.82 1272,668.69 1277.17,677.78 1282.35,666.77 1287.53,666.25 1292.7,665.73 1297.88,673.06 1303.05,674.11 1308.22,656.47 1313.4,663.11 1318.58,667.65 1323.75,670.62 1328.92,665.03 1334.1,656.12 1339.28,699.6 1344.45,649.66 1349.62,655.77 1354.8,670.79 1359.97,670.96 1365.15,659.61 1370.33,662.76 1375.5,672.36 1380.67,655.42 1385.85,672.71 1391.03,669.22 1396.2,663.81 1401.38,675.68 1406.55,668.35 1411.72,672.01 1416.9,663.81 1422.08,676.2 1427.25,669.22 1432.42,669.57 1437.6,657.34 1442.78,659.09 1447.95,655.25 1453.12,656.82 1458.3,644.42 1463.47,656.82 1468.65,663.46 1473.83,677.08 1479,685.98" fill="none" stroke="#EF843C" stroke-width="1.2" stroke-linejoin="round" />
<polygon points="1013.25,782.5 1013.25,775.31 1018.42,766.14 1023.6,753.07 1028.78,746.23 1033.95,737.67 1039.12,735.84 1044.3,721.55 1049.47,721.91 1054.65,720.57 1059.83,742.93 1065,709.57 1070.17,706.03 1075.35,700.53 1080.53,700.16 1085.7,690.75 1090.88,696.13 1096.05,707.86 1101.22,706.64 1106.4,704.93 1111.58,717.64 1116.75,697.84 1121.92,702.24 1127.1,710.67 1132.28,711.53 1137.45,704.07 1142.62,742.07 1147.8,708.35 1152.97,705.66 1158.15,701.75 1163.33,729.61 1168.5,708.96 1173.67,701.38 1178.85,701.02 1184.03,706.88 1189.2,776.29 1194.38,770.42 1199.55,706.88 1204.72,703.46 1209.9,700.16 1215.08,744.15 1220.25,709.94 1225.42,714.21 1230.6,709.57 1235.78,700.53 1240.95,704.07 1246.12,709.82 1251.3,703.58 1256.47,708.84 1261.65,708.23 1266.83,710.18 1272,703.09 1277.17,709.45 1282.35,701.75 1287.53,701.38 1292.7,701.02 1297.88,706.15 1303.05,706.88 1308.22,694.54 1313.4,699.18 1318.58,702.36 1323.75,704.44 1328.92,700.53 1334.1,694.3 1339.28,724.72 1344.45,689.78 1349.62,694.05 1354.8,704.56 1359.97,704.68 1365.15,696.74 1370.33,698.94 1375.5,705.66 1380.67,693.81 1385.85,705.91 1391.03,703.46 1396.2,699.67 1401.38,707.98 1406.55,702.85 1411.72,705.42 1416.9,699.67 1422.08,708.35 1427.25,703.46 1432.42,703.71 1437.6,695.15 1442.78,696.37 1447.95,693.69 1453.12,694.79 1458.3,686.11 1463.47,694.79 1468.65,699.43 1473.83,708.96 1479,715.19 1479,782.5" fill="#7EB26D" fill-opacity="0.1"/>
<polygon points="1013.25,782.5 1013.25,775.31 1018.42,766.14 1023.6,753.07 1028.78,746.23 1033.95,737.67 1039.12,735.84 1044.3,721.55 1049.47,721.91 1054.65,720.57 1059.83,742.93 1065,709.57 1070.17,706.03 1075.35,700.53 1080.53,700.16 1085.7,690.75 1090.88,696.13 1096.05,707.86 1101.22,706.64 1106.4,704.93 1111.58,717.64 1116.75,697.84 1121.92,702.24 1127.1,710.67 1132.28,711.53 1137.45,704.07 1142.62,742.07 1147.8,708.35 1152.97,705.66 1158.15,701.75 1163.33,729.61 1168.5,708.96 1173.67,701.38 1178.85,701.02 1184.03,706.88 1189.2,776.29 1194.38,770.42 1199.55,706.88 1204.72,703.46 1209.9,700.16 1215.08,744.15 1220.25,709.94 1225.42,714.21 1230.6,709.57 1235.78,700.53 1240.95,704.07 1246.12,709.82 1251.3,703.58 1256.47,708.84 1261.65,708.23 1266.83,710.18 1272,703.09 1277.17,709.45 1282.35,701.75 1287.53,701.38 1292.7,701.02 1297.88,706.15 1303.05,706.88 1308.22,694.54 1313.4,699.18 1318.58,702.36 1323.75,704.44 1328.92,700.53 1334.1,694.3 1339.28,724.72 1344.45,689.78 1349.62,694.05 1354.8,704.56 1359.97,704.68 1365.15,696.74 1370.33,698.94 1375.5,705.66 1380.67,693.81 1385.85,705.91 1391.03,703.46 1396.2,699.67 1401.38,707.98 1406.55,702.85 1411.72,705.42 1416.9,699.67 1422.08,708.35 1427.25,703.46 1432.42,703.71 1437.6,695.15 1442.78,696.37 1447.95,693.69 1453.12,694.79 1458.3,686.11 1463.47,694.79 1468.65,699.43 1473.83,708.96 1479,715.19 1479,782.5" fill="#EAB839" fill-opacity="0.1"/>
<polyline points="1013.25,775.31 1018.42,766.14 1023.6,753.07 1028.78,746.23 1033.95,737.67 1039.12,735.84 1044.3,721.55 1049.47,721.91 1054.65,720.57 1059.83,742.93 1065,709.57 1070.17,706.03 1075.35,700.53 1080.53,700.16 1085.7,690.75 1090.88,696.13 1096.05,707.86 1101.22,706.64 1106.4,704.93 1111.58,717.64 1116.75,697.84 1121.92,702.24 1127.1,710.67 1132.28,711.53 1137.45,704.07 1142.62,742.07 1147.8,708.35 1152.97,705.66 1158.15,701.75 1163.33,729.61 1168.5,708.96 1173.67,701.38 1178.85,701.02 1184.03,706.88 1189.2,776.29 1194.38,770.42 1199.55,706.88 1204.72,703.46 1209.9,700.16 1215.08,744.15 1220.25,709.94 1225.42,714.21 1230.6,709.57 1235.78,700.53 1240.95,704.07 1246.12,709.82 1251.3,703.58 1256.47,708.84 1261.65,708.23 1266.83,710.18 1272,703.09 1277.17,709.45 1282.35,701.75 1287.53,701.38 1292.7,701.02 1297.88,706.15 1303.05,706.88 1308.22,694.54 1313.4,699.18 1318.58,702.36 1323.75,704.44 1328.92,700.53 1334.1,694.3 1339.28,724.72 1344.45,689.78 1349.62,694.05 1354.8,704.56 1359.97,704.68 1365.15,696.74 1370.33,698.94 1375.5,705.66 1380.67,693.81 1385.85,705.91 1391.03,703.46 1396.2,699.67 1401.38,707.98 1406.55,702.85 1411.72,705.42 1416.9,699.67 1422.08,708.35 1427.25,703.46 1432.42,703.71 1437.6,695.15 1442.78,696.37 1447.95,693.69 1453.12,694.79 1458.3,686.11 1463.47,694.79 1468.65,699.43 1473.83,708.96 1479,715.19" fill="none" stroke="#EAB839" stroke-width="1.2" stroke-linejoin="round" />
<rect x="1013" y="780.75" width="466.5" height="2.3" fill="#d57a37"/>
<line x1="1009" y1="634" x2="1009" y2="783" stroke="#0c7389" stroke-width="2" stroke-dasharray="3.1 1.9"/><polygon points="1003.2,790.4 1014.6,790.4 1008.9,784.2" fill="#00b6db"/>
<g class="ax">
<text x="979" y="639.5" text-anchor="end" transform="rotate(0.03 979 639.5)">2.4 MiB</text>
<text x="979" y="668.9" text-anchor="end" transform="rotate(0.03 979 668.9)">1.9 MiB</text>
<text x="979" y="698.4" text-anchor="end" transform="rotate(0.03 979 698.4)">1.4 MiB</text>
<text x="979" y="728" text-anchor="end" transform="rotate(0.03 979 728)">977 KiB</text>
<text x="979" y="757.3" text-anchor="end" transform="rotate(0.03 979 757.3)">488 KiB</text>
<text x="979" y="786.7" text-anchor="end" transform="rotate(0.03 979 786.7)">0 B</text>
<text x="1085.75" y="809.6" text-anchor="middle" transform="rotate(0.03 1085.75 809.6)">23:36</text>
<text x="1209.5" y="809.6" text-anchor="middle" transform="rotate(0.03 1209.5 809.6)">23:38</text>
<text x="1334.25" y="809.6" text-anchor="middle" transform="rotate(0.03 1334.25 809.6)">23:40</text>
<text x="1457.75" y="809.6" text-anchor="middle" transform="rotate(0.03 1457.75 809.6)">23:42</text>
</g>
</g>
<g class="legend">
<rect x="1519.7" y="666.05" width="11.3" height="1.6" fill="#EF843C"/>
<text class="lv" x="1541.5" y="671.55" transform="rotate(0.03 1541.5 671.55)">all</text>
<text class="lv" x="1724.25" y="671.55" text-anchor="end" transform="rotate(0.03 1724.25 671.55)">2.24 MiB</text>
<text class="lv" x="1803" y="671.55" text-anchor="end" transform="rotate(0.03 1803 671.55)">1.68 MiB</text>
<rect class="alt" x="1505" y="681" width="309" height="27"/>
<rect x="1519.7" y="693.55" width="11.3" height="1.6" fill="#6ED0E0"/>
<text class="lv" x="1541.5" y="699.05" transform="rotate(0.03 1541.5 699.05)">8_生成订单信息</text>
<text class="lv" x="1724.25" y="699.05" text-anchor="end" transform="rotate(0.03 1724.25 699.05)">2.24 MiB</text>
<text class="lv" x="1803" y="699.05" text-anchor="end" transform="rotate(0.03 1803 699.05)">1.68 MiB</text>
<rect x="1519.7" y="721.05" width="11.3" height="1.6" fill="#EAB839"/>
<text class="lv" x="1541.5" y="726.55" transform="rotate(0.03 1541.5 726.55)">all</text>
<text class="lv" x="1724.25" y="726.55" text-anchor="end" transform="rotate(0.03 1724.25 726.55)">1.57 MiB</text>
<text class="lv" x="1803" y="726.55" text-anchor="end" transform="rotate(0.03 1803 726.55)">1.17 MiB</text>
<rect class="alt" x="1505" y="736" width="309" height="27"/>
<rect x="1519.7" y="748.55" width="11.3" height="1.6" fill="#7EB26D"/>
<text class="lv" x="1541.5" y="754.05" transform="rotate(0.03 1541.5 754.05)">8_生成订单信息</text>
<text class="lv" x="1724.25" y="754.05" text-anchor="end" transform="rotate(0.03 1724.25 754.05)">1.57 MiB</text>
<text class="lv" x="1803" y="754.05" text-anchor="end" transform="rotate(0.03 1803 754.05)">1.17 MiB</text>
<text class="lh" x="1724.4" y="646.7" text-anchor="end" transform="rotate(0.03 1724.4 646.7)">max</text>
<text class="lh" x="1786" y="646.7" text-anchor="end" transform="rotate(0.03 1786 646.7)">avg</text>
<path d="M1790.9 638.9 L1794.4 642.4 L1797.9 638.9" fill="none" stroke="#33a2e5" stroke-width="1.4"/>
</g>
</svg>
</section>
</body>
</html>
